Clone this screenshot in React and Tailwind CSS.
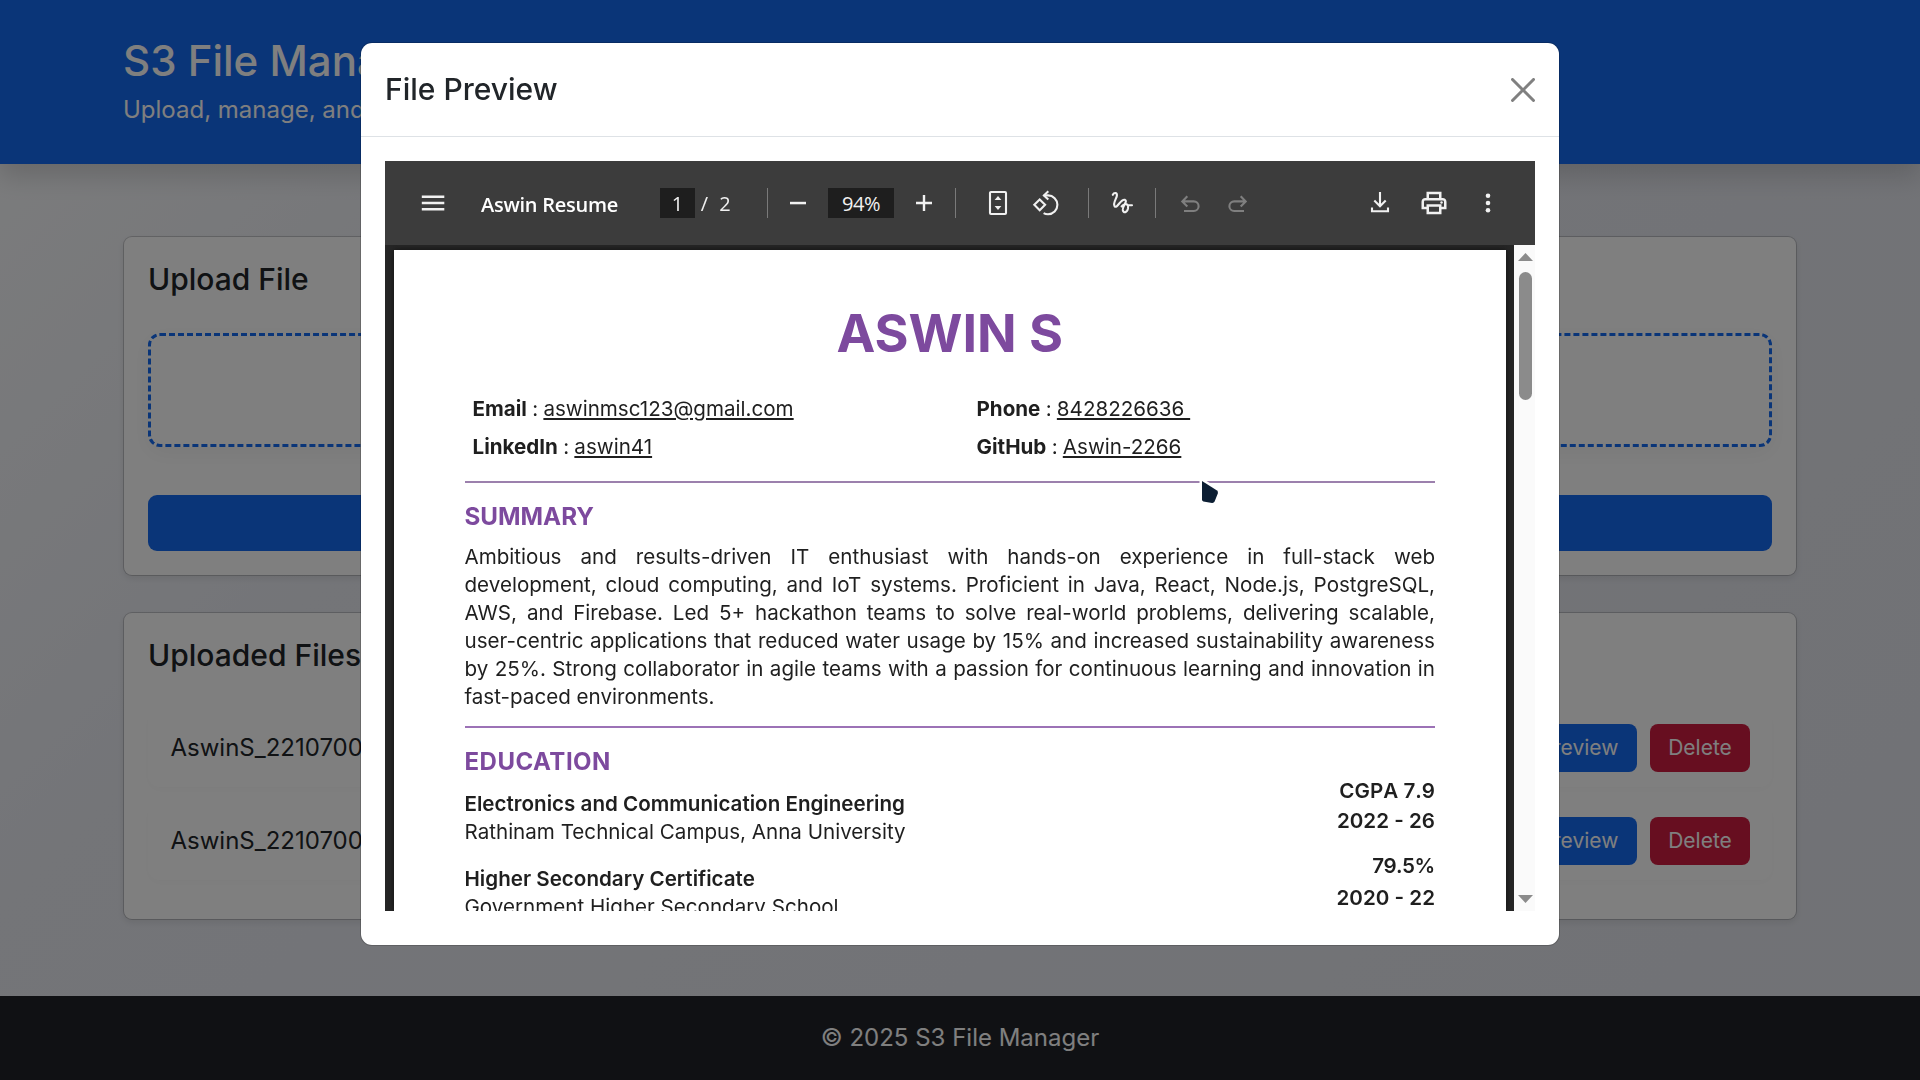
import React from 'react';

const summaryLines = [
  'Ambitious and results-driven IT enthusiast with hands-on experience in full-stack web',
  'development, cloud computing, and IoT systems. Proficient in Java, React, Node.js, PostgreSQL,',
  'AWS, and Firebase. Led 5+ hackathon teams to solve real-world problems, delivering scalable,',
  'user-centric applications that reduced water usage by 15% and increased sustainability awareness',
  'by 25%. Strong collaborator in agile teams with a passion for continuous learning and innovation in',
];

const files = ['AswinS_2210700', 'AswinS_2210700'];

function Icon({ className = '', children, stroke = true }) {
  return (
    <svg
      viewBox="0 0 30 30"
      className={`size-[30px] shrink-0 ${className}`}
      fill={stroke ? 'none' : 'currentColor'}
      stroke={stroke ? 'currentColor' : 'none'}
      strokeWidth="2.1"
    >
      {children}
    </svg>
  );
}

function Separator({ className }) {
  return <div className={`h-[30px] w-px shrink-0 bg-[#7a7a7a] ${className}`} />;
}

function Toolbar() {
  return (
    <div className="flex h-[84px] shrink-0 items-center bg-[#3c3c3c] font-['Open_Sans',sans-serif] text-[20px] leading-8 text-[#f1f1f1]">
      <Icon className="ml-[33px]" stroke={false}>
        <path d="M3.8 7.5h22.5v2.5H3.8zM3.8 13.8h22.5v2.5H3.8zM3.8 20h22.5v2.5H3.8z" />
      </Icon>
      <div className="ml-[33px] w-[137px] pt-[3px] font-semibold tracking-[-0.25px] whitespace-nowrap text-white">Aswin Resume</div>
      <div className="ml-[42px] h-[30px] w-[35px] bg-[#1e1e1e] text-center">1</div>
      <div className="ml-[5px] w-[9px] pt-0.5 text-center">/</div>
      <div className="ml-[10px] w-3 pt-0.5 text-center">2</div>
      <Separator className="ml-9" />
      <Icon className="ml-[15px]" stroke={false}>
        <path d="M7 13.8h16v2.5H7z" />
      </Icon>
      <div className="ml-[15px] h-[30px] w-[66px] bg-[#1e1e1e] text-center tracking-[-0.5px]">94%</div>
      <Icon className="ml-[15px]" stroke={false}>
        <path d="M7 13.8h6.8V7h2.4v6.8H23v2.4h-6.8V23h-2.4v-6.8H7z" />
      </Icon>
      <Separator className="ml-4" />
      <Icon className="ml-[27px]">
        <rect x="7" y="4" width="16" height="22" rx="1" />
        <path d="M15 8l3.4 4h-6.8zM15 22l3.4-4h-6.8z" fill="currentColor" stroke="none" />
      </Icon>
      <Icon className="ml-[18px]">
        <path d="M8.7 11.4l5.4 5.4-5.4 5.4-5.4-5.4z" />
        <path d="M12.8 7.4h4.2a9.4 9.4 0 0 1 0 18.8c-1.7 0-3.2-.4-4.4-1.1" />
        <path d="M17.3 3.2l-4.4 4.2 4.4 4.2" />
      </Icon>
      <Separator className="ml-[27px]" />
      <Icon className="ml-[18px]">
        <path
          strokeLinecap="round"
          d="M5.8 6.8C7 4.4 10.2 4.3 9.9 7.6C9.6 10.8 5.6 14.8 7.6 18.2C10.2 21.2 13.6 10.6 17.8 11.8C21.4 13.2 15.2 17.6 15.8 22C16.4 25.6 20.2 24.6 21 20.4C21.6 16.8 19.8 15.8 17.8 16.2C16.6 16.5 15.4 17.4 14.6 18.4M20.6 17.2H25"
        />
      </Icon>
      <Separator className="ml-[18px]" />
      <Icon className="ml-[19px] text-[#7f7f7f]">
        <path d="M7.5 13.4h11.3a4.7 4.7 0 0 1 0 9.6H9M12.3 8.2l-5 5.2 5 5.2" />
      </Icon>
      <Icon className="ml-[18px] text-[#7f7f7f]">
        <path d="M22.5 13.4H11.2a4.7 4.7 0 0 0 0 9.6H21M17.7 8.2l5 5.2-5 5.2" />
      </Icon>
      <div className="mr-8 ml-auto flex gap-6">
        <Icon>
          <path d="M15 4v14M9.3 12.6l5.7 5.7 5.7-5.7M7 19.6v3.6h16v-3.6" />
        </Icon>
        <svg viewBox="0 0 24 24" className="size-[30px]" fill="currentColor">
          <path d="M19 8h-1V3H6v5H5c-1.66 0-3 1.34-3 3v6h4v4h12v-4h4v-6c0-1.66-1.34-3-3-3zM8 5h8v3H8V5zm8 12v2H8v-4h8v2zm2-2v-2H6v2H4v-4c0-.55.45-1 1-1h14c.55 0 1 .45 1 1v4h-2z" />
          <circle cx="18" cy="11.5" r="1" />
        </svg>
        <Icon stroke={false}>
          <circle cx="15" cy="7.8" r="2.3" />
          <circle cx="15" cy="15" r="2.3" />
          <circle cx="15" cy="22.2" r="2.3" />
        </Icon>
      </div>
    </div>
  );
}

function Contact({ label, value }) {
  return (
    <div className="h-[38px] leading-[38px] whitespace-pre">
      <span className="font-bold">{label}</span>
      <span className="tracking-[-0.35px]"> : </span>
      <span className="underline decoration-2 underline-offset-2">{value}</span>
    </div>
  );
}

function Resume() {
  return (
    <div className="h-[661px] w-[1112px] shrink-0 overflow-hidden bg-white pt-[52px] pr-[71px] pl-[70.5px] text-[20.6px] leading-7 text-[#1f1f1f] shadow-[0_0_6px_#111]">
      <h1 className="text-center text-[52px] leading-[64px] font-bold text-[#7d4a9e]">ASWIN S</h1>
      <div className="mt-6 grid grid-cols-[504px_1fr] pl-2">
        <Contact label="Email" value="aswinmsc123@gmail.com" />
        <Contact label="Phone" value={'8428226636\u00a0'} />
        <Contact label="LinkedIn" value="aswin41" />
        <Contact label="GitHub" value="Aswin-2266" />
      </div>
      <div className="mt-[15px] h-0.5 bg-[#9c80ad]" />
      <h2 className="mt-4 text-[24.2px] leading-9 font-bold text-[#7d4a9e]">SUMMARY</h2>
      <div className="mt-2">
        {summaryLines.map((line) => (
          <p key={line} className="text-justify whitespace-nowrap [text-align-last:justify]">{line}</p>
        ))}
        <p>fast-paced environments.</p>
      </div>
      <div className="mt-[15px] h-0.5 bg-[#9c72b6]" />
      <h2 className="mt-[18px] text-[24px] leading-8 font-bold tracking-[0.5px] text-[#7d4a9e]">EDUCATION</h2>
      <div className="flex justify-between">
        <div className="pt-3">
          <p className="font-semibold">Electronics and Communication Engineering</p>
          <p>Rathinam Technical Campus, Anna University</p>
          <p className="mt-[19px] font-semibold">Higher Secondary Certificate</p>
          <p>Government Higher Secondary School</p>
        </div>
        <div className="-mt-px text-right font-semibold">
          <p className="[font-kerning:none]">CGPA 7.9</p>
          <p className="mt-0.5">2022 - 26</p>
          <p className="mt-[17px] tracking-[-0.3px]">79.5%</p>
          <p className="mt-1">2020 - 22</p>
        </div>
      </div>
    </div>
  );
}

function Scrollbar() {
  return (
    <div className="flex w-[21px] shrink-0 flex-col items-center bg-[#fafafa] pt-2 pb-2 pl-0.5 text-[#8b8b8b]">
      <svg viewBox="0 0 15 8" className="h-2 w-[15px]" fill="currentColor"><path d="M7.5 0L15 8H0z" /></svg>
      <div className="mt-[11px] h-32 w-[13px] rounded-full bg-[#8b8b8b]" />
      <svg viewBox="0 0 15 8" className="mt-auto h-2 w-[15px]" fill="currentColor"><path d="M7.5 8L15 0H0z" /></svg>
    </div>
  );
}

function PreviewModal() {
  return (
    <div className="fixed inset-0 flex justify-center bg-black/50">
      <div className="mt-[42px] flex h-[904px] w-[1200px] flex-col rounded-xl border border-black/[0.175] bg-white bg-clip-padding">
        <div className="flex h-[94px] shrink-0 items-center justify-between border-b border-[#dee2e6] px-6">
          <h5 className="text-[30px] leading-[45px] font-medium text-[#212529]">File Preview</h5>
          <svg viewBox="0 0 16 16" className="size-6 text-[#808080]" fill="currentColor">
            <path d="M.293.293a1 1 0 0 1 1.414 0L8 6.586 14.293.293a1 1 0 1 1 1.414 1.414L9.414 8l6.293 6.293a1 1 0 0 1-1.414 1.414L8 9.414l-6.293 6.293a1 1 0 0 1-1.414-1.414L6.586 8 .293 1.707a1 1 0 0 1 0-1.414" />
          </svg>
        </div>
        <div className="px-6 pt-6">
          <div className="flex h-[750px] flex-col overflow-hidden">
            <Toolbar />
            <div className="flex min-h-0 flex-1">
              <div className="flex flex-1 overflow-hidden bg-[#262626] pt-[5px] pl-[9px]">
                <Resume />
              </div>
              <Scrollbar />
            </div>
          </div>
        </div>
      </div>
    </div>
  );
}

function Card({ className, title, children }) {
  return (
    <section className={`rounded-[9px] border border-black/[0.175] bg-white bg-clip-padding p-6 shadow-[0_3px_6px_rgba(0,0,0,0.075)] ${className}`}>
      <h5 className="text-[30px] leading-9 font-medium">{title}</h5>
      {children}
    </section>
  );
}

export default function App() {
  return (
    <div className="flex h-[1080px] w-[1920px] flex-col overflow-hidden bg-[linear-gradient(135deg,#f9fafb_0%,#e8eaf1_30%,#e2e4eb_100%)] font-['Inter',sans-serif] text-2xl leading-9 text-[#212529]">
      <header className="h-[164px] shrink-0 bg-[#146af0] pt-9 text-white shadow-[0_12px_24px_rgba(0,0,0,0.15)]">
        <div className="mx-auto w-[1674px]">
          <h1 className="text-[42px] leading-[50px] font-medium">S3 File Manager</h1>
          <p className="mt-1.5">Upload, manage, and preview your files</p>
        </div>
      </header>

      <main className="mx-auto flex w-[1674px] flex-1 flex-col gap-9 pt-[72px]">
        <Card title="Upload File" className="h-[340px]">
          <div className="mt-9 h-[114px] rounded-xl border-3 border-dashed border-[#146af0] shadow-[0_6px_22px_rgba(0,0,0,0.05)]" />
          <div className="mt-12 h-14 rounded-[9px] bg-[#146af0]" />
        </Card>
        <Card title="Uploaded Files" className="h-[308px]">
          <div className="mt-9 flex flex-col gap-[15px]">
            {files.map((name, i) => (
              <div key={i} className="flex h-[78px] items-center rounded-xl pr-[22px] pl-[22.5px] shadow-[0_3px_9px_rgba(0,0,0,0.025)]">
                <span className="mr-auto">{name}</span>
                <button className="h-12 w-[116px] rounded-lg bg-[#146af0] text-[21px] text-white">Preview</button>
                <button className="ml-[13px] h-12 w-[100px] rounded-lg bg-[#ce1c40] text-[21px] text-white">Delete</button>
              </div>
            ))}
          </div>
        </Card>
      </main>

      <footer className="flex h-[84px] shrink-0 items-center justify-center bg-[#202228] text-white">
        © 2025 S3 File Manager
      </footer>

      <PreviewModal />

      <svg viewBox="0 0 26 30" className="fixed top-[476px] left-[1197px] h-[30px] w-[26px]">
        <path
          d="M5 5L20 14.6Q21.4 15.8 20.8 17.6L17.6 25.6Q16.8 27.2 15 27L6.4 25.4Q5 25 5 23.6Z"
          fill="#0c1e33"
          stroke="#fff"
          strokeWidth="5"
          paintOrder="stroke"
        />
      </svg>
    </div>
  );
}
